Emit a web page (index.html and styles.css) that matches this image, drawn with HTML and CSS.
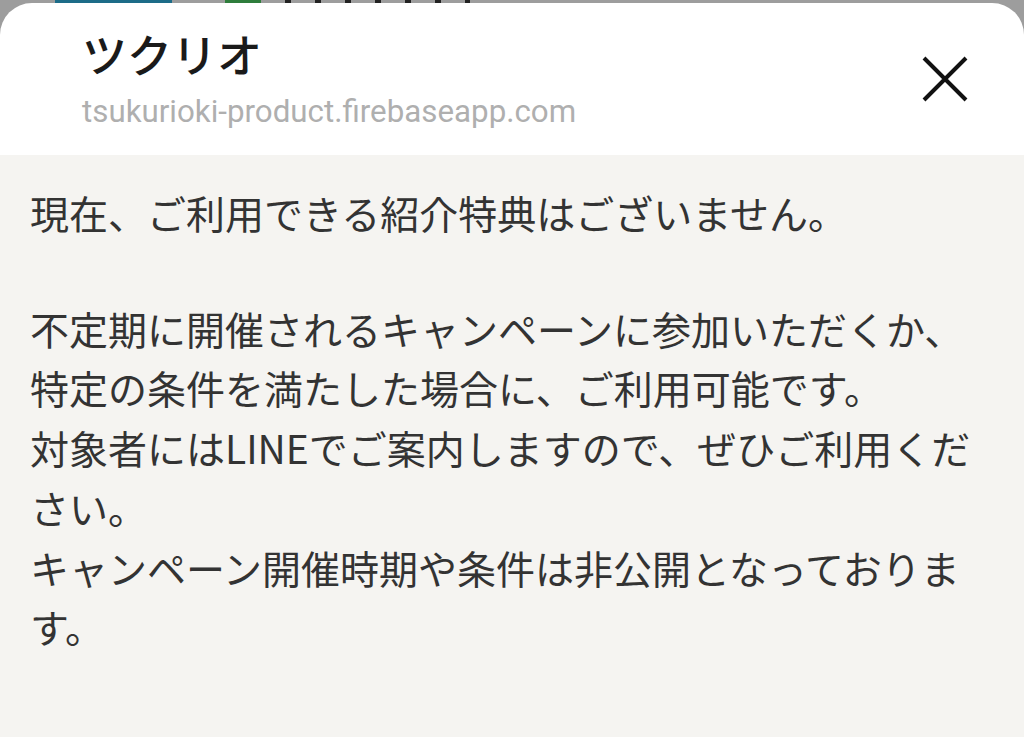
FILE: index.html
```html
<!DOCTYPE html>
<html lang="ja">

<head>
    <meta charset="UTF-8">
    <meta name="viewport" content="width=device-width, initial-scale=1.0">
    <title>ツクリオ</title>
    <link rel="stylesheet" href="styles.css">
</head>

<body>
    <div class="peek">
        <span class="peek-tab"></span>
        <span class="peek-icon"></span>
        <span class="peek-text"></span>
    </div>

    <div class="sheet">
        <div class="sheet-header">
            <div class="sheet-titles">
                <div class="sheet-title">ツクリオ</div>
                <div class="sheet-url">tsukurioki-product.firebaseapp.com</div>
            </div>
            <button class="close-btn" aria-label="閉じる">
                <svg width="46" height="46" viewBox="0 0 46 46">
                    <path d="M2 2 L44 44 M44 2 L2 44" stroke="#111" stroke-width="4" fill="none" />
                </svg>
            </button>
        </div>

        <div class="sheet-body">
            <p>現在、ご利用できる紹介特典はございません。</p>
            <p class="spacer"></p>
            <p>不定期に開催されるキャンペーンに参加いただくか、<br>特定の条件を満たした場合に、ご利用可能です。<br>対象者にはLINEでご案内しますので、ぜひご利用ください。<br>キャンペーン開催時期や条件は非公開となっております。</p>
        </div>
    </div>
</body>

</html>
```

FILE: styles.css
```css
html,
body {
    height: 100%;
}

body {
    margin: 0;
    background-color: #9d9d9d;
    font-family: "Noto Sans CJK JP", "Noto Sans", sans-serif;
    display: flex;
    flex-direction: column;
    overflow: hidden;
}

.peek {
    height: 3px;
    display: flex;
    align-items: stretch;
    flex-shrink: 0;
}

.peek-tab {
    width: 117px;
    margin-left: 55px;
    background-color: #1c6c88;
}

.peek-icon {
    width: 36px;
    margin-left: 53px;
    background-color: #2f7d3c;
}

.peek-text {
    width: 185px;
    margin-left: 24px;
    background: repeating-linear-gradient(90deg, #222 0 6px, #9d9d9d 6px 30px);
}

.sheet {
    flex: 1;
    background-color: white;
    border-radius: 32px 32px 0 0;
    display: flex;
    flex-direction: column;
    overflow: hidden;
}

.sheet-header {
    height: 152px;
    box-sizing: border-box;
    display: flex;
    align-items: flex-start;
    padding: 22px 56px 0 82px;
    flex-shrink: 0;
}

.sheet-titles {
    flex: 1;
}

.sheet-title {
    font-size: 45px;
    font-weight: 500;
    color: #1a1a1a;
    line-height: 58px;
}

.sheet-url {
    font-family: Roboto, "Noto Sans", sans-serif;
    font-size: 31.3px;
    color: #afafaf;
    line-height: 36px;
    margin-top: 11px;
}

.close-btn {
    background: none;
    border: none;
    padding: 0;
    margin-top: 31px;
    cursor: pointer;
    display: flex;
}

.sheet-body {
    flex: 1;
    background-color: #f5f4f1;
    padding: 28px 30px;
    color: #333;
    font-size: 39px;
    line-height: 59.7px;
}

.sheet-body p {
    margin: 0;
}

.spacer {
    height: 56px;
}
```
